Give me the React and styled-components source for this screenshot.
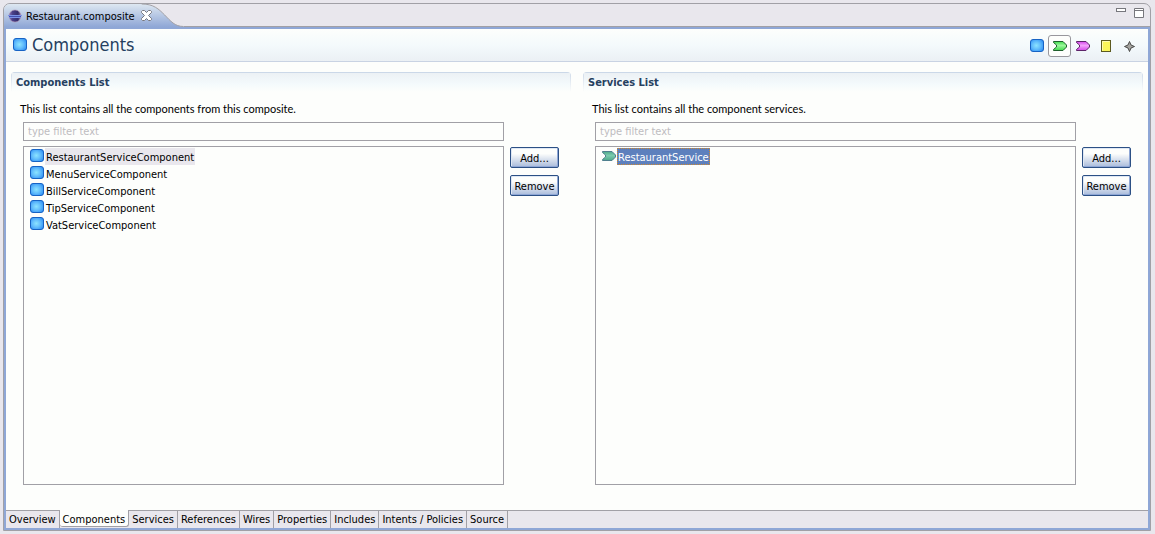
import React, { useState } from 'react';
import styled, { createGlobalStyle } from 'styled-components';

const uiFont = 'Tahoma, "DejaVu Sans Condensed", sans-serif';
const textFont = 'Tahoma, Lato, sans-serif';

const GlobalStyle = createGlobalStyle`
* { box-sizing: border-box; }
body {
margin: 0;
background: #e9e7ed;
color: #000;
font: 11px/13px ${uiFont};
}
button, input { font: inherit; color: inherit; }
`;
const Window = styled.div`
display: flex;
flex-direction: column;
min-height: 100vh;
padding: 3px 4px 3px 3px;
`;
const Frame = styled.div`
display: flex;
flex-direction: column;
flex: 1;
border: 1px solid #a1a0a6;
border-radius: 7px 7px 0 0;
overflow: hidden;
`;
const EditorBar = styled.header`
display: flex;
justify-content: space-between;
height: 23px;
`;
const EditorTab = styled.div`
position: relative;
display: flex;
align-items: center;
height: 23px;
padding: 1px 32px 0 4px;
gap: 4px;
`;
const TabShape = styled.svg`
position: absolute;
left: 0;
top: 0;
width: 100%;
height: 23px;
`;
const TabLabel = styled.span`
position: relative;
`;
const TabIcon = styled.svg`
position: relative;
`;
const BarLine = styled.div`
display: flex;
flex: 1;
justify-content: flex-end;
align-items: flex-start;
gap: 8px;
padding: 4px 6px;
border-bottom: 1px solid #a1a0a6;
`;
const IconButton = styled.button`
position: relative;
display: flex;
padding: 0;
border: 0;
background: none;
`;
const CloseButton = styled(IconButton)`
margin: 0 0 2px 2px;
`;
const Editor = styled.main`
display: flex;
flex-direction: column;
flex: 1;
border: 2px solid #8fa7d6;
background: #fdfefc;
`;
const FormHead = styled.div`
display: flex;
align-items: center;
justify-content: space-between;
height: 33px;
padding: 0 8px 0 6px;
border-bottom: 1px solid #c9d3e3;
background: linear-gradient(#fdfefc, #f4fafc 50%, #ebf0f4);
`;
const FormTitle = styled.h1`
display: flex;
align-items: center;
gap: 4px;
margin: 0;
color: #25405f;
font: 18px/22px ${uiFont};
`;
const Toolbar = styled.div`
display: flex;
align-items: center;
padding-top: 2px;
`;
const ToolButton = styled.button`
display: flex;
align-items: center;
justify-content: center;
width: 23px;
height: 22px;
padding: 0;
border: 1px solid ${props => props.$active ? '#98979d' : 'transparent'};
border-radius: 3px;
background: ${props => props.$active ? '#fdfefc' : 'none'};
`;
const Sections = styled.div`
display: flex;
flex: 1;
gap: 12px;
padding: 10px 5px 25px;
`;
const Section = styled.section`
display: flex;
flex-direction: column;
flex: 1;
`;
const SectionTitle = styled.h2`
margin: 0;
padding: 4px 5px 3px;
height: 20px;
border-radius: 4px 4px 0 0;
background:
linear-gradient(#cbd8e8, #cbd8e8) top / 100% 1px no-repeat,
linear-gradient(#cbd8e8, #fdfefc) left / 1px 100% no-repeat,
linear-gradient(#cbd8e8, #fdfefc) right / 1px 100% no-repeat,
linear-gradient(#ebf0f4, #f4fafc 60%, #fdfefc);
color: #25405f;
font-size: 11px;
font-weight: 700;
`;
const Description = styled.p`
margin: 10px 9px 7px;
font-family: ${textFont};
`;
const SectionBody = styled.div`
display: grid;
flex: 1;
grid-template-columns: 1fr 49px;
grid-template-rows: 19px 1fr;
gap: 5px 6px;
padding: 0 12px;
`;
const Filter = styled.input`
grid-column: 1;
min-width: 0;
padding: 0 4px;
border: 1px solid #a1a0a6;
border-radius: 0;
background: #fdfefc;
&::placeholder { color: #bdbcc0; opacity: 1; }
`;
const List = styled.ul`
grid-column: 1;
margin: 0;
padding: 1px 5px;
border: 1px solid #a1a0a6;
list-style: none;
`;
const Item = styled.li`
display: flex;
align-items: flex-start;
height: 17px;
`;
const ItemLabel = styled.span`
height: 17px;
padding: 1px 0 0;
line-height: 15px;
border: 1px solid transparent;
${props => props.$state === 'inactive' ? `
border-color: #e9e7ed;
background: #e9e7ed;
` : null}
${props => props.$state === 'selected' ? `
border: 1px dotted #d08a30;
background: #5d80bd;
color: #fff;
` : null}
`;
const Actions = styled.div`
display: flex;
flex-direction: column;
gap: 7px;
padding-top: 1px;
`;
const ActionButton = styled.button`
height: 21px;
padding: 1px 0 0;
border: 1px solid #2c5085;
border-radius: 2px;
background: linear-gradient(#fdfefc 30%, #a9bbdb);
box-shadow: inset -1px -1px #8fa7d6, inset 1px 1px #dfe8f4;
`;
const PageTabs = styled.nav`
display: flex;
align-items: flex-start;
height: 18px;
border-top: 1px solid #a1a0a6;
background: #e9e7ed;
`;
const PageTab = styled.button`
height: 17px;
padding: 0 3px;
border: 0;
border-right: 1px solid #a1a0a6;
background: none;
${props => props.$active ? `
margin-top: -1px;
padding-top: 2px;
border-bottom: 1px solid #a1a0a6;
border-radius: 0 0 3px 3px;
background: #fdfefc;
` : null}
`;

const ComponentIcon = () => (
    <svg width="16" height="16" viewBox="0 0 16 16">
        <defs>
            <radialGradient id="blue" cx=".45" cy=".5" r=".65">
                <stop offset="0" stopColor="#8ce4ff" />
                <stop offset=".5" stopColor="#62bdfc" />
                <stop offset="1" stopColor="#2b8cf4" />
            </radialGradient>
        </defs>
        <rect x="1.5" y="1.5" width="13" height="12" rx="2.5" fill="url(#blue)" stroke="#1763c4" />
    </svg>
);

const ArrowIcon = ({ fill, light, stroke }) => (
    <svg width="16" height="16" viewBox="0 0 16 16">
        <defs>
            <linearGradient id={`arrow${fill.slice(1)}`} x2="0" y2="1">
                <stop offset="0" stopColor={fill} />
                <stop offset=".45" stopColor={light} />
                <stop offset="1" stopColor={fill} />
            </linearGradient>
        </defs>
        <path d="M1.5 3.5H11L14.5 7V9L11 12.500H1.5V11.5L4.5 9V7L1.5 4.5z" fill={`url(#arrow${fill.slice(1)})`} stroke={stroke} />
    </svg>
);

const PropertyIcon = () => (
    <svg width="16" height="16" viewBox="0 0 16 16">
        <rect x="3.5" y="2.5" width="9" height="11" fill="#faf55a" stroke="#5c5a20" />
        <path d="M4.5 12.5v-9h7" fill="none" stroke="#fdfbb0" />
    </svg>
);

const WireIcon = () => (
    <svg width="16" height="16" viewBox="0 0 16 16">
        <path d="M8.5 3.5L10 7L13.5 8.5L10 10L8.5 13.5L7 10L3.5 8.5L7 7z" fill="#a5a4a0" stroke="#4a4a48" />
    </svg>
);

const EclipseIcon = () => (
    <TabIcon width="14" height="14" viewBox="0 0 14 14">
        <defs>
            <linearGradient id="eclipse">
                <stop offset="0" stopColor="#8a78b8" />
                <stop offset=".3" stopColor="#4a3f88" />
                <stop offset=".75" stopColor="#332c6c" />
                <stop offset="1" stopColor="#9a84ae" />
            </linearGradient>
        </defs>
        <circle cx="7" cy="7" r="6" fill="url(#eclipse)" stroke="#b08fae" strokeWidth=".6" />
        <path d="M0 6.5h14M1 8.5h12" stroke="#7b92e6" />
        <path d="M1 7.5h12" stroke="#4650b0" />
    </TabIcon>
);

const ListSection = ({ title, description, items, label }) => (
    <Section>
        <SectionTitle>{title}</SectionTitle>
        <Description>{description}</Description>
        <SectionBody>
            <Filter type="text" placeholder="type filter text" aria-label={label} />
            <List>
                {items.map(item => (
                    <Item key={item.name}>
                        {item.icon}
                        <ItemLabel $state={item.state}>{item.name}</ItemLabel>
                    </Item>
                ))}
            </List>
            <Actions>
                <ActionButton>Add...</ActionButton>
                <ActionButton>Remove</ActionButton>
            </Actions>
        </SectionBody>
    </Section>
);

const components = ['Restaurant', 'Menu', 'Bill', 'Tip', 'Vat'].map((name, i) => ({
    name: `${name}ServiceComponent`,
    icon: <ComponentIcon />,
    state: i === 0 ? 'inactive' : null,
}));
const services = [{
    name: 'RestaurantService',
    icon: <ArrowIcon fill="#4fa98a" light="#7cccae" stroke="#4f7f8e" />,
    state: 'selected',
}];
const tools = [
    { name: 'Components', icon: <ComponentIcon /> },
    { name: 'Services', icon: <ArrowIcon fill="#3fdc4c" light="#9cf79c" stroke="#1f5f2c" /> },
    { name: 'References', icon: <ArrowIcon fill="#d546ea" light="#f3a2fb" stroke="#5c2468" /> },
    { name: 'Properties', icon: <PropertyIcon /> },
    { name: 'Wires', icon: <WireIcon /> },
];
const pages = ['Overview', 'Components', 'Services', 'References', 'Wires', 'Properties', 'Includes', 'Intents / Policies', 'Source'];

const App = () => {
    const [page, setPage] = useState('Components');
    const [tool, setTool] = useState('Services');
    return (
        <Window>
            <GlobalStyle />
            <Frame>
                <EditorBar>
                    <EditorTab>
                        <TabShape viewBox="0 0 180 23" preserveAspectRatio="none">
                            <defs>
                                <linearGradient id="tab" x2="0" y2="1">
                                    <stop offset="0" stopColor="#dde7f1" />
                                    <stop offset="1" stopColor="#8fa7d6" />
                                </linearGradient>
                            </defs>
                            <path d="M0 0H138C150 0 155 5 161 11S171 22.5 180 22.5V23H0z" fill="url(#tab)" />
                            <path d="M138 0C150 0 155 5 161 11S171 22.5 180 22.5" fill="none" stroke="#a1a0a6" />
                        </TabShape>
                        <EclipseIcon />
                        <TabLabel>Restaurant.composite</TabLabel>
                        <CloseButton aria-label="Close">
                            <svg width="11" height="11" viewBox="0 0 11 11">
                                <path d="M.5 1.5l1-1h2l2 2 2-2h2l1 1v1l-3 3 3 3v1l-1 1h-2l-2-2-2 2h-2l-1-1v-1l3-3-3-3z" fill="#fff" stroke="#77777d" />
                            </svg>
                        </CloseButton>
                    </EditorTab>
                    <BarLine>
                        <IconButton aria-label="Minimize">
                            <svg width="10" height="10" viewBox="0 0 10 10">
                                <rect x=".5" y=".5" width="9" height="3" fill="#fff" stroke="#77777d" />
                            </svg>
                        </IconButton>
                        <IconButton aria-label="Maximize">
                            <svg width="10" height="10" viewBox="0 0 10 10">
                                <path d="M.5 .5h9v9h-9zM.5 2.5h9" fill="#fff" stroke="#77777d" />
                            </svg>
                        </IconButton>
                    </BarLine>
                </EditorBar>
                <Editor>
                    <FormHead>
                        <FormTitle><ComponentIcon />Components</FormTitle>
                        <Toolbar>
                            {tools.map(t => (
                                <ToolButton key={t.name} aria-label={t.name} $active={t.name === tool} onClick={() => setTool(t.name)}>
                                    {t.icon}
                                </ToolButton>
                            ))}
                        </Toolbar>
                    </FormHead>
                    <Sections>
                        <ListSection
                            title="Components List"
                            description="This list contains all the components from this composite."
                            items={components}
                            label="Filter components"
                        />
                        <ListSection
                            title="Services List"
                            description="This list contains all the component services."
                            items={services}
                            label="Filter services"
                        />
                    </Sections>
                    <PageTabs>
                        {pages.map(name => (
                            <PageTab key={name} $active={name === page} onClick={() => setPage(name)}>{name}</PageTab>
                        ))}
                    </PageTabs>
                </Editor>
            </Frame>
        </Window>
    );
};
export default App;
